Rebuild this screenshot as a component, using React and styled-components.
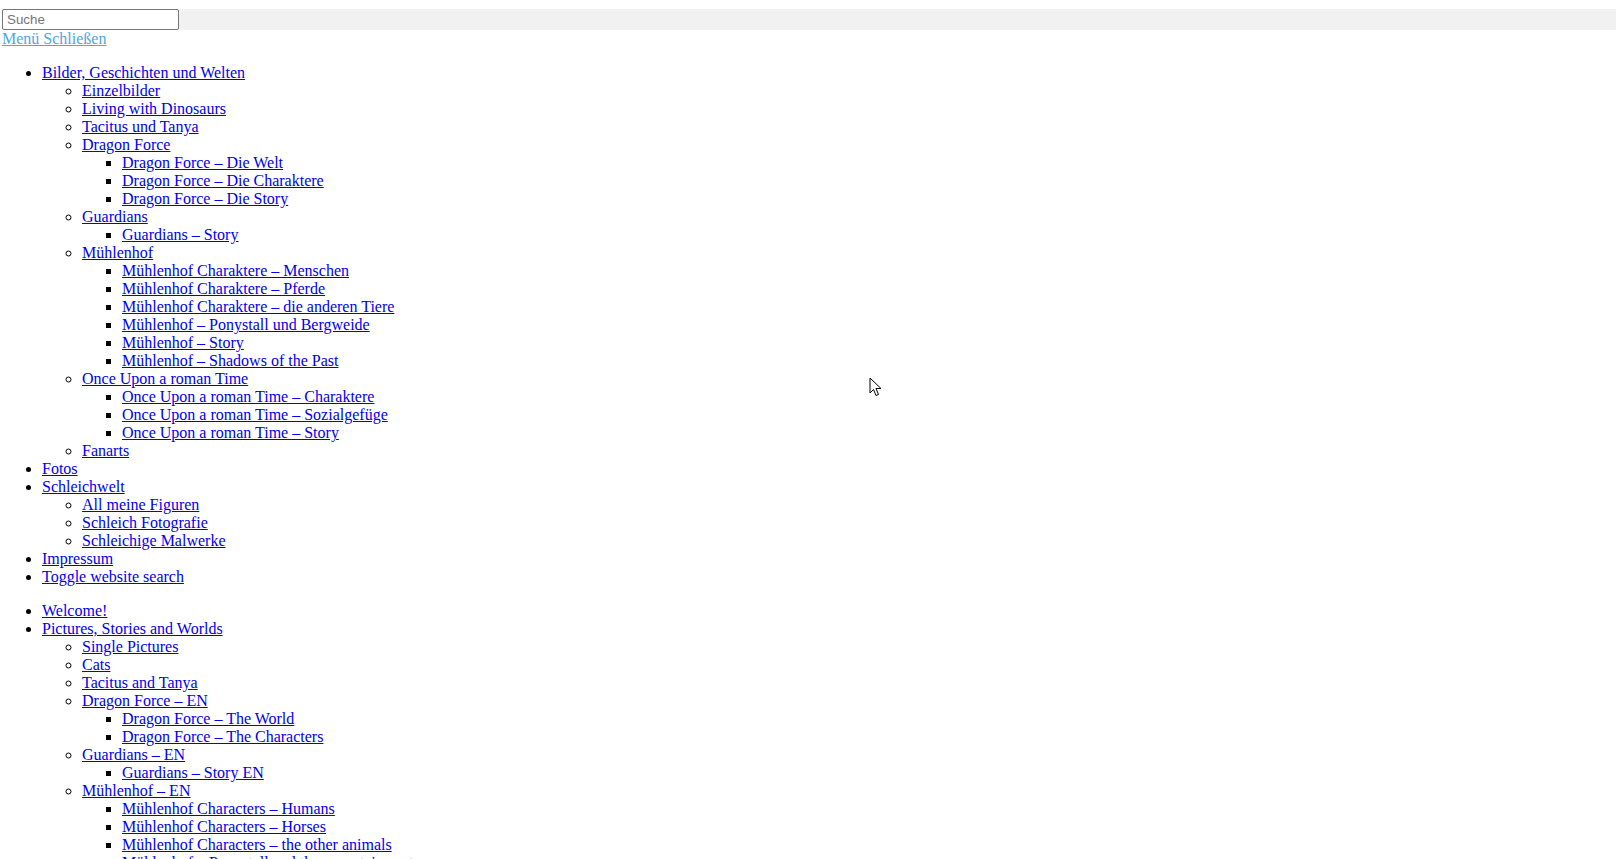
import React from "react";
import styled, { createGlobalStyle } from "styled-components";

const Global = createGlobalStyle`
  html, body { margin: 0; padding: 0; background: #fff; }
  body { font-family: "Liberation Serif", "Times New Roman", serif; font-size: 16px; line-height: 18px; color: #000; }
`;

const Page = styled.div`
  padding: 9px 0 0 2px;
  position: relative;
`;

const SearchBar = styled.form`
  display: flex;
  height: 21px;
  background: #f1f1f1;
  margin: 0;
`;

const SearchInput = styled.input`
  box-sizing: border-box;
  width: 177px;
  height: 21px;
  margin: 0;
  padding: 1px 4px;
  border: 1px solid #767676;
  border-radius: 2px;
  background: #fff;
  font-family: "Liberation Sans", Arial, sans-serif;
  font-size: 13.33px;
  &::placeholder { color: #757575; }
`;

const MenuLink = styled.a`
  display: inline-block;
  color: #4fa6e0;
  text-decoration: underline;
`;

const List = styled.ul`
  margin: ${(p) => (p.$nested ? "0" : "16px 0")};
  padding-left: 40px;
  list-style-type: ${(p) => ["disc", "circle", "square"][p.$level]};
`;

const Item = styled.li`
  line-height: 18px;
`;

const Link = styled.a`
  color: #0000ee;
  text-decoration: underline;
`;

const Cursor = styled.svg`
  position: absolute;
  left: 869px;
  top: 377px;
  width: 13px;
  height: 20px;
  pointer-events: none;
`;

const menuDe = [
  ["Bilder, Geschichten und Welten", [
    ["Einzelbilder"],
    ["Living with Dinosaurs"],
    ["Tacitus und Tanya"],
    ["Dragon Force", [["Dragon Force – Die Welt"], ["Dragon Force – Die Charaktere"], ["Dragon Force – Die Story"]]],
    ["Guardians", [["Guardians – Story"]]],
    ["Mühlenhof", [
      ["Mühlenhof Charaktere – Menschen"],
      ["Mühlenhof Charaktere – Pferde"],
      ["Mühlenhof Charaktere – die anderen Tiere"],
      ["Mühlenhof – Ponystall und Bergweide"],
      ["Mühlenhof – Story"],
      ["Mühlenhof – Shadows of the Past"],
    ]],
    ["Once Upon a roman Time", [
      ["Once Upon a roman Time – Charaktere"],
      ["Once Upon a roman Time – Sozialgefüge"],
      ["Once Upon a roman Time – Story"],
    ]],
    ["Fanarts"],
  ]],
  ["Fotos"],
  ["Schleichwelt", [["All meine Figuren"], ["Schleich Fotografie"], ["Schleichige Malwerke"]]],
  ["Impressum"],
  ["Toggle website search"],
];

const menuEn = [
  ["Welcome!"],
  ["Pictures, Stories and Worlds", [
    ["Single Pictures"],
    ["Cats"],
    ["Tacitus and Tanya"],
    ["Dragon Force – EN", [["Dragon Force – The World"], ["Dragon Force – The Characters"]]],
    ["Guardians – EN", [["Guardians – Story EN"]]],
    ["Mühlenhof – EN", [
      ["Mühlenhof Characters – Humans"],
      ["Mühlenhof Characters – Horses"],
      ["Mühlenhof Characters – the other animals"],
      ["Mühlenhof – Ponystall and the mountain pasture"],
      ["Mühlenhof – Story EN"],
    ]],
  ]],
];

function Menu({ items, level = 0 }) {
  return (
    <List $level={Math.min(level, 2)} $nested={level > 0}>
      {items.map(([label, children], i) => (
        <Item key={i}>
          <Link href="#">{label}</Link>
          {children && <Menu items={children} level={level + 1} />}
        </Item>
      ))}
    </List>
  );
}

export default function App() {
  return (
    <>
      <Global />
      <Page>
        <SearchBar onSubmit={(e) => e.preventDefault()}>
          <SearchInput type="search" placeholder="Suche" />
        </SearchBar>
        <MenuLink href="#">Menü Schließen</MenuLink>
        <Menu items={menuDe} />
        <Menu items={menuEn} />
        <Cursor viewBox="0 0 13 20">
          <path d="M1 1 L1 16 L4.5 12.5 L7 18.5 L9.5 17.5 L7 11.5 L12 11.5 Z" fill="#fff" stroke="#000" strokeWidth="1" strokeLinejoin="miter" />
        </Cursor>
      </Page>
    </>
  );
}
